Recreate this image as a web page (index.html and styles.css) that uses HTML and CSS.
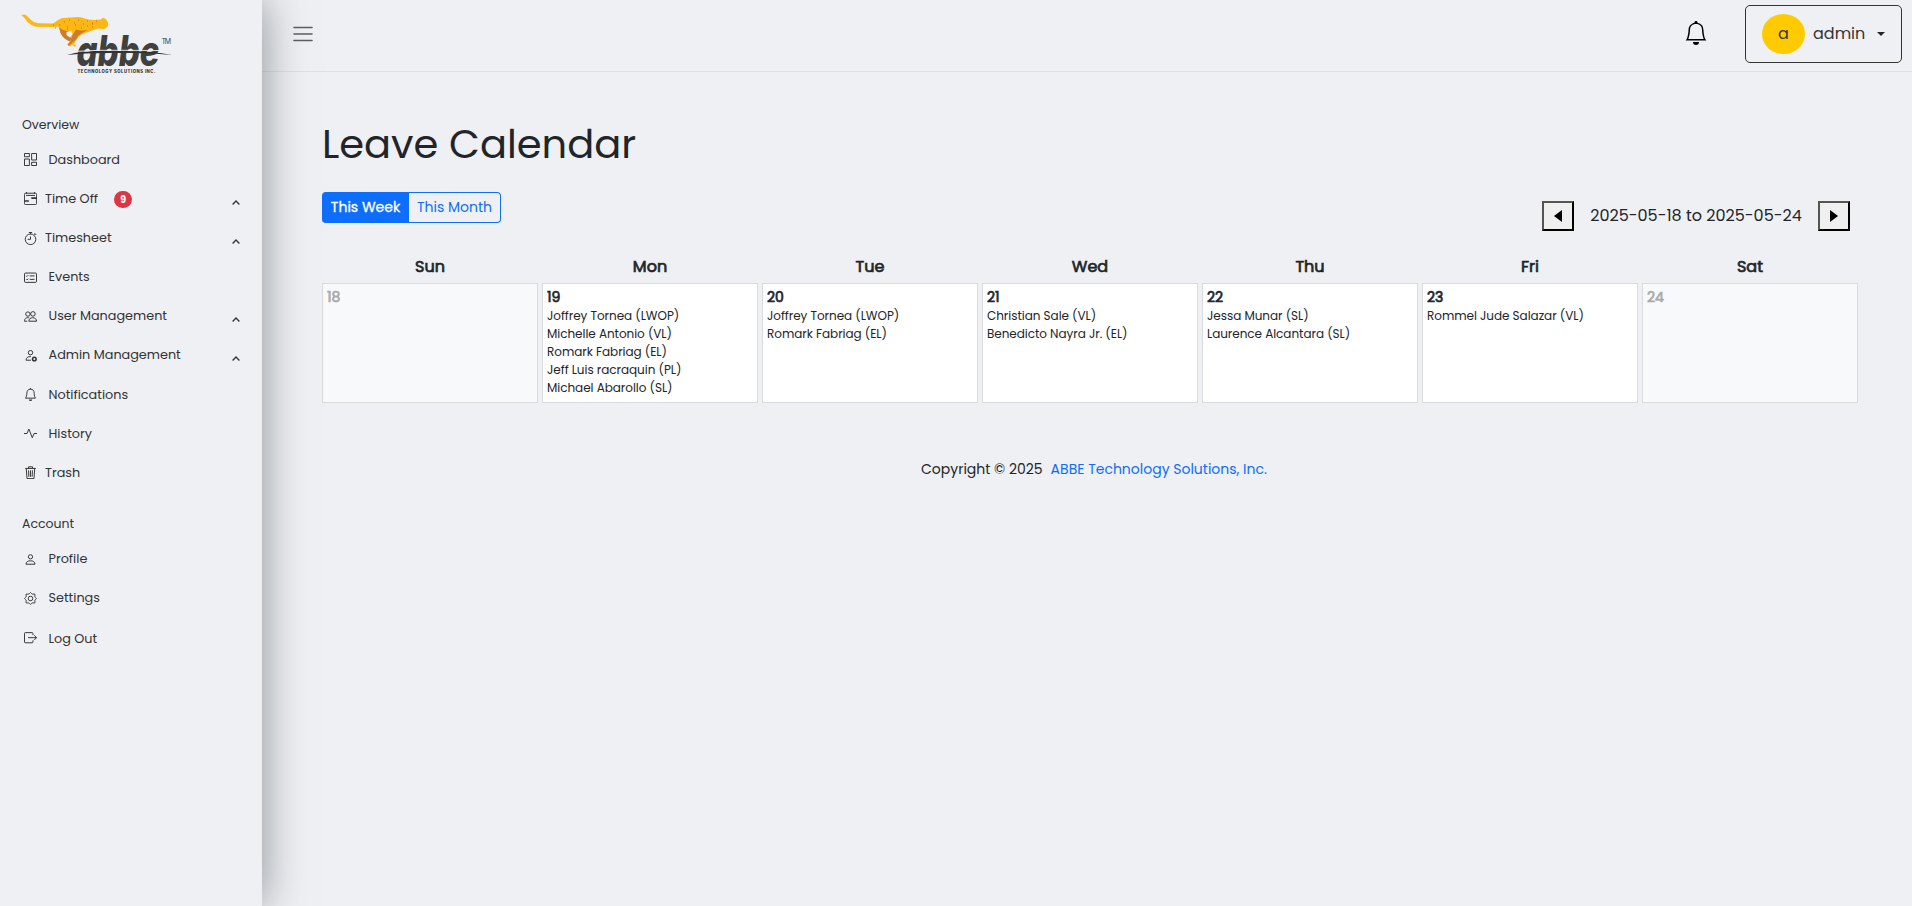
FILE: index.html
```html
<!DOCTYPE html>
<html lang="en">
<head>
<meta charset="utf-8">
<title>Leave Calendar</title>
<link rel="stylesheet" href="styles.css">
</head>
<body>
<div class="app">
  <aside class="sidebar">
    <svg class="logo" width="156" height="66" viewBox="0 0 156 66">
      <path fill="#fdb714" d="M-.5 2.500C.5 1 3 1 4.500 2.500L8.500 6.500Q11.500 9.800 16 10.300L31 10.500L36 7Q39 4.800 44 4.700L56 4Q61 4.500 65 6.300Q72 7.500 79 6.500L81 4.800L83 5.500Q87 9 86 13L82.500 16L76 15.500Q70 17.500 65 19.500L60 21.500Q56 23.500 54.500 27L51.500 31.500L54 32L53 34L50 31.500L48 33.500L45.500 31.500L48.500 27.500L43 24.500Q38 21 38.500 18L36.500 13.800L31 14L14 13.800Q9 12.500 5.500 9Q3 4.500-.5 2.500z"/>
      <path fill="#cf7c2a" d="M37 14.500L42 17.500L47.500 18L45.500 22L50 26L48 28.500Q41 26 38.500 20zM54 16.500Q59 18 66 17L60 20Q56 22 54.500 26L50 30L47 33L45.500 31.500L49 28L50 23z"/>
      <path fill="#eff0f4" d="M44.500 19L49.500 17.500L50.500 21L48 24.500L44.500 22z"/>
      <path d="M42 9h1m4-2h1m4 3h1m3-3h1m4 4h1m3-3h1m4 3h1m3-3h1m-30 6h1m7-2h1m5 3h1m5-2h1m4 1h1m-26 2h1m-13-1h1m3-3h1m-7 0h1m38-2h1" stroke="#c4701f" stroke-width="1.200"/>
      <text class="logo-word" x="54.500" y="52.500" textLength="83" lengthAdjust="spacingAndGlyphs">abbe</text>
      <path d="M45 42Q62 37 98 38Q128 37.500 150 42Q128 39.500 98 40Q65 39.500 45 42z" fill="#333431"/>
      <path d="M56 38.300Q75 36.800 98 37.300L137 37.500" stroke="#eff0f4" stroke-width=".9" fill="none"/>
      <text class="logo-tm" x="139.500" y="31" textLength="9.500">TM</text>
      <text class="logo-sub" x="55.500" y="59.500" textLength="78">TECHNOLOGY SOLUTIONS INC.</text>
    </svg>

    <p class="section">Overview</p>
    <nav class="menu">
      <a class="item"><svg class="ico" viewBox="0 0 16 16"><path d="M.6.600h6v4h-6zM9.400.600h6v8h-6zM.6 7.400h6v8h-6zM9.400 11.400h6v4h-6z"/></svg><span>Dashboard</span></a>
      <a class="item tight"><svg class="ico" viewBox="0 0 16 16"><path d="M2 1.500h12q1.500 0 1.500 1.500v11q0 1.500-1.500 1.500H2Q.5 15.500.5 14V3Q.5 1.500 2 1.500zM3 0v2M13 0v2M2.500 4.200h11"/><path d="M9 7.500h6.500M.5 11H6" stroke-width="2"/></svg><span>Time Off</span><b class="badge">9</b><svg class="chev" viewBox="0 0 8 5"><path d="M.6 4.500L4 1l3.400 3.500"/></svg></a>
      <a class="item tight"><svg class="ico" viewBox="0 0 16 16"><circle cx="8" cy="9" r="6.500"/><path d="M6 .6h4M8 .6v2M8 5.500V9H4.500M12.700 3.700l1.300-1.300M13 1.500l2 2"/></svg><span>Timesheet</span><svg class="chev" viewBox="0 0 8 5"><path d="M.6 4.500L4 1l3.400 3.500"/></svg></a>
      <a class="item"><svg class="ico" viewBox="0 0 16 16"><rect x=".6" y="2.500" width="14.800" height="11.500" rx="1.300"/><path d="M7 6h6M7 10.300h6M2.800 6l.8.8 1.600-1.600M2.800 10.300l.8.8 1.600-1.600"/></svg><span>Events</span></a>
      <a class="item"><svg class="ico" viewBox="0 0 16 16"><circle cx="4.800" cy="5" r="2.700"/><circle cx="11" cy="4.800" r="2.800"/><path d="M6 13.800c0-2.600 2-4.300 4.700-4.300s4.800 1.700 4.800 4.300zM6.500 9.800C3 8.500.5 10.500.5 13.800H4"/></svg><span>User Management</span><svg class="chev" viewBox="0 0 8 5"><path d="M.6 4.500L4 1l3.400 3.500"/></svg></a>
      <a class="item"><svg class="ico" viewBox="0 0 16 16"><circle cx="8" cy="4.500" r="2.700"/><path d="M8.500 13.800H2.500c0-3 2-4.500 6-4.500"/><circle cx="12.700" cy="12.300" r="2.200" stroke-width="1.900"/></svg><span>Admin Management</span><svg class="chev" viewBox="0 0 8 5"><path d="M.6 4.500L4 1l3.400 3.500"/></svg></a>
      <a class="item low"><svg class="ico up" viewBox="0 0 16 16"><path d="M8 1.400c-3 0-4.500 2.200-4.500 5 0 3-.7 4.800-1.700 6.100h12.400c-1-1.300-1.700-3.100-1.700-6.100 0-2.800-1.500-5-4.500-5zM8 0v1.500"/><path d="M6 14h4a2 2 0 0 1-4 0z" fill="currentColor" stroke="none"/></svg><span>Notifications</span></a>
      <a class="item low"><svg class="ico up" viewBox="0 0 16 16"><path d="M0 8h3.700L6 2.500l4.200 10.700L12.400 8H16"/></svg><span>History</span></a>
      <a class="item tight"><svg class="ico" viewBox="0 0 16 16"><path d="M1.500 3h13M5.500 3V1h5v2M2.800 3l.9 12.500h8.600L13.200 3M5.600 5.300l.4 8M8 5.300v8M10.400 5.300l-.4 8"/></svg><span>Trash</span></a>
    </nav>

    <p class="section account">Account</p>
    <nav class="menu">
      <a class="item"><svg class="ico" viewBox="0 0 16 16"><circle cx="8" cy="4.700" r="2.600"/><path d="M2.500 13.800c0-2.800 2-4.200 5.500-4.200s5.500 1.400 5.500 4.200z"/></svg><span>Profile</span></a>
      <a class="item"><svg class="ico" viewBox="0 0 16 16"><circle cx="8" cy="8" r="2.800"/><path d="M6.600 2Q8-.8 9.400 2q.7 1 1.900.5 2.900-1 2.200 2.200-.5 1.200.5 1.900 2.800 1.400 0 2.800-1 .7-.5 1.900.7 3.200-2.200 2.200-1.200-.5-1.900.5-1.400 2.800-2.800 0-.7-1-1.900-.5-2.900 1-2.200-2.200.5-1.200-.5-1.900-2.800-1.400 0-2.800 1-.7.5-1.900-.7-3.200 2.200-2.200 1.200.5 1.900-.5z"/></svg><span>Settings</span></a>
      <a class="item low out"><svg class="ico up" viewBox="0 0 16 16"><path d="M11 5V3q0-1-1-1H1.600q-1 0-1 1v10.500q0 1 1 1H10q1 0 1-1v-2M5 8.200h10.500M12.500 5.200l3 3-3 3"/></svg><span>Log Out</span></a>
    </nav>
  </aside>

  <div class="page">
    <header class="topbar">
      <svg class="burger" width="20" height="16" viewBox="0 0 20 16"><path d="M1 1.500h18M1 8h18M1 14.500h18"/></svg>
      <svg class="bell" width="24" height="24" viewBox="0 0 16 16"><path d="M8 16a2 2 0 0 0 2-2H6a2 2 0 0 0 2 2M8 1.918l-.797.161A4 4 0 0 0 4 6c0 .628-.134 2.197-.459 3.742-.16.767-.376 1.566-.663 2.258h10.244c-.287-.692-.502-1.490-.663-2.258C12.134 8.197 12 6.628 12 6a4 4 0 0 0-3.203-3.920zM14.220 12c.223.447.481.801.780 1H1c.299-.199.557-.553.780-1C2.680 10.200 3 6.880 3 6c0-2.420 1.720-4.440 4.005-4.901a1 1 0 1 1 1.990 0A5 5 0 0 1 13 6c0 .880.320 4.200 1.220 6"/></svg>
      <div class="user"><span class="avatar">a</span><span class="uname">admin</span><i class="caret"></i></div>
    </header>

    <main class="content">
      <h1>Leave Calendar</h1>
      <div class="tools">
        <div class="tabs"><span class="tab on">This Week</span><span class="tab">This Month</span></div>
        <div class="range">
          <span class="nav-btn"><svg width="8" height="12" viewBox="0 0 8 12"><path d="M8 0v12L0 6z"/></svg></span>
          <span class="range-text">2025-05-18 to 2025-05-24</span>
          <span class="nav-btn"><svg width="8" height="12" viewBox="0 0 8 12"><path d="M0 0v12l8-6z"/></svg></span>
        </div>
      </div>
      <div class="grid heads"><b>Sun</b><b>Mon</b><b>Tue</b><b>Wed</b><b>Thu</b><b>Fri</b><b>Sat</b></div>
      <div class="grid">
        <div class="cell off"><b>18</b></div>
        <div class="cell"><b>19</b><p>Joffrey Tornea (LWOP)</p><p>Michelle Antonio (VL)</p><p>Romark Fabriag (EL)</p><p>Jeff Luis racraquin (PL)</p><p>Michael Abarollo (SL)</p></div>
        <div class="cell"><b>20</b><p>Joffrey Tornea (LWOP)</p><p>Romark Fabriag (EL)</p></div>
        <div class="cell"><b>21</b><p>Christian Sale (VL)</p><p>Benedicto Nayra Jr. (EL)</p></div>
        <div class="cell"><b>22</b><p>Jessa Munar (SL)</p><p>Laurence Alcantara (SL)</p></div>
        <div class="cell"><b>23</b><p>Rommel Jude Salazar (VL)</p></div>
        <div class="cell off"><b>24</b></div>
      </div>
    </main>
    <footer class="footer"><span>Copyright © 2025</span><a>ABBE Technology Solutions, Inc.</a></footer>
  </div>
</div>
</body>
</html>
```

FILE: styles.css
```css
* { box-sizing: border-box; }
body {
  margin: 0;
  background: #eff0f4;
  color: #212529;
  font-family: Poppins, Inter, "Open Sans", sans-serif;
}
p, h1 { margin: 0; }
.app { display: flex; height: 906px; overflow: hidden; }

.sidebar {
  width: 262px;
  flex: none;
  position: relative;
  z-index: 2;
  background: #eff0f4;
  box-shadow: 0 0 42px rgba(70, 78, 82, .6);
  padding-top: 13px;
  color: #333;
}
.logo { display: block; margin-left: 22px; overflow: visible; }
.logo-word { font: italic 800 42px Inter, sans-serif; fill: #40403e; }
.logo-tm { font: 7px Inter, sans-serif; fill: #444; }
.logo-sub { font: 800 4.200px Inter, sans-serif; fill: #333; }
.section { margin: 36px 0 0 22px; height: 20px; line-height: 20px; font-size: 12.500px; }
.section.account { margin-top: 22px; }
.menu { display: flex; flex-direction: column; padding-top: 5.300px; }
.item {
  display: flex;
  align-items: center;
  height: 39.140px;
  padding: 0 22px 0 24px;
  font-size: 12.800px;
}
.low { padding-top: 1px; }
.out { padding-top: 2px; }
.ico {
  width: 13px;
  height: 13px;
  margin-right: 11.500px;
  fill: none;
  stroke: currentColor;
  stroke-width: 1.200;
}
.ico.up { margin-top: -2px; }
.tight .ico { margin-right: 8px; }
.badge {
  width: 18px;
  height: 17px;
  margin: 2px 0 0 16px;
  border-radius: 9px;
  background: #dc3545;
  color: #fff;
  font-size: 9.500px;
  line-height: 17px;
  text-align: center;
}
.chev { width: 8px; height: 5px; margin: 7px 0 0 auto; fill: none; stroke: #333; stroke-width: 1.300; }

.page { flex: 1; }
.topbar {
  display: flex;
  align-items: center;
  height: 72px;
  padding: 0 10px 4px 31px;
  border-bottom: 1px solid #dee2e6;
}
.burger { stroke: #5c5e61; stroke-width: 1.600; stroke-linecap: round; }
.burger path { fill: none; }
.bell { margin: -2px 37px 0 auto; }
.user {
  display: flex;
  align-items: center;
  width: 157px;
  height: 58px;
  padding: 0 16px;
  border: 1px solid #333;
  border-radius: 5px;
  font-size: 16px;
  color: #333;
}
.avatar {
  width: 43px;
  height: 40px;
  border-radius: 50%;
  background: #ffcb00;
  line-height: 40px;
  text-align: center;
  margin-right: 8px;
}
.caret { margin-left: auto; border: 4px solid transparent; border-top-color: #212529; border-bottom: 0; }

.content { padding: 48px 54px 0 60px; }
h1 { font-size: 40px; font-weight: 400; line-height: 48px; }
.tools { display: flex; justify-content: space-between; margin-top: 24px; }
.tabs { display: flex; height: 31px; font-size: 14px; line-height: 29px; }
.tab {
  width: 92px;
  border: 1px solid #0d6efd;
  border-left: 0;
  border-radius: 0 4px 4px 0;
  color: #0d6efd;
  text-align: center;
}
.tab.on { width: 87px; padding-left: 1px; border-radius: 4px 0 0 4px; background: #0d6efd; color: #fff; -webkit-text-stroke: .3px; }
.range { display: flex; align-items: center; margin: 9px 8px 0 0; height: 30px; }
.range-text { width: 244px; padding-bottom: 1px; text-align: center; font-size: 16px; }
.nav-btn {
  display: flex;
  align-items: center;
  justify-content: center;
  width: 32px;
  height: 30px;
  padding-bottom: 1px;
  border: 2px outset #000;
  background: #efefef;
}
.grid { display: grid; grid-template-columns: repeat(7, 216px); gap: 4px; }
.heads { margin-top: 23px; height: 29px; line-height: 26px; font-size: 16px; text-align: center; }
.heads b { font-weight: 400; -webkit-text-stroke: .7px; }
.cell { height: 120px; border: 1px solid #d9dbdd; background: #fff; padding: 4px; }
.cell b { display: block; height: 19px; font-size: 14px; font-weight: 400; line-height: 19px; -webkit-text-stroke: .7px; }
.cell p { font-size: 12px; line-height: 18px; letter-spacing: -.04px; white-space: nowrap; }
.cell.off { background: #f8f9fb; color: #aaa; }

.footer { display: flex; justify-content: center; gap: 8px; margin-top: 56px; padding-left: 14px; font-size: 14px; line-height: 21px; }
.footer a { color: #0d6efd; }
```
